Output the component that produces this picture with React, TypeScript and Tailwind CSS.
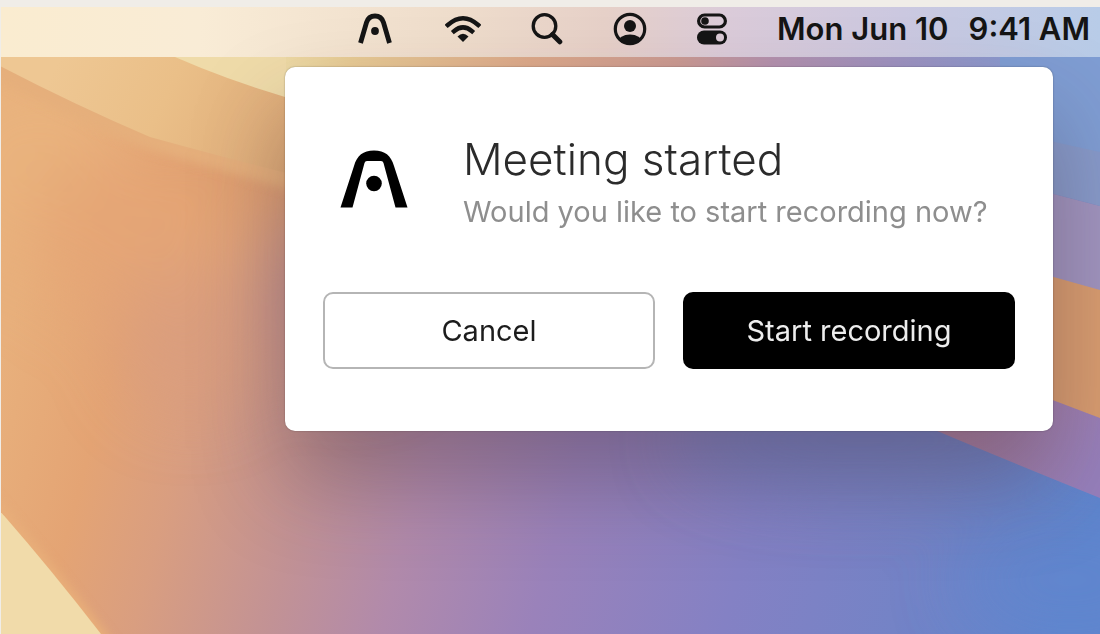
/** Product mark: open arch with a dot in the middle */
const ArchLogo = ({ className }: { className?: string }) => (
  <svg viewBox="0 0 68 58" className={className} fill="currentColor" aria-hidden="true">
    <path d="M0.500 57.500 L14 16 C17 5.500 23 0.500 34 0.500 C45 0.500 51 5.500 54 16 L67.500 57.500 H55.500 L43.500 13 Q43 11 41 11 H27 Q25 11 24.500 13 L12.500 57.500 Z" />
    <circle cx="34" cy="33.500" r="7.800" />
  </svg>
);

/** Menu bar version of the mark, drawn with a lighter stroke */
const ArchGlyph = () => (
  <svg viewBox="0 0 40 34" className="h-[34px] w-10" fill="none" aria-hidden="true">
    <path d="M5.500 31 L11.500 10.500 Q13.500 4 20 4 Q26.500 4 28.500 10.500 L34.500 31" stroke="currentColor" strokeWidth="4.800" />
    <circle cx="20" cy="19" r="3.900" fill="currentColor" />
  </svg>
);

const WifiGlyph = () => (
  <svg viewBox="0 0 36 34" className="h-[34px] w-9" fill="none" aria-hidden="true">
    <path d="M2.800 13 Q18 -0.500 33.200 13" stroke="currentColor" strokeWidth="4.400" strokeLinecap="square" />
    <path d="M9 19.200 Q18 11.600 27 19.200" stroke="currentColor" strokeWidth="4.400" strokeLinecap="square" />
    <path d="M18 30 L12.500 24.500 Q18 19 23.500 24.500 Z" fill="currentColor" />
  </svg>
);

const SearchGlyph = () => (
  <svg viewBox="0 0 32 34" className="h-[34px] w-8" fill="none" stroke="currentColor" aria-hidden="true">
    <circle cx="13.500" cy="14" r="11.300" strokeWidth="3.300" />
    <path d="M21.500 22.500 L28.800 29.800" strokeWidth="5" strokeLinecap="round" />
  </svg>
);

const UserGlyph = () => (
  <svg viewBox="0 0 34 34" className="size-[34px]" aria-hidden="true">
    <defs>
      <clipPath id="user-ring">
        <circle cx="17" cy="17" r="15" />
      </clipPath>
    </defs>
    <circle cx="17" cy="17" r="14.700" fill="none" stroke="currentColor" strokeWidth="3.200" />
    <circle cx="17" cy="14" r="6" fill="currentColor" />
    <ellipse cx="17" cy="30" rx="12" ry="7.500" fill="currentColor" clipPath="url(#user-ring)" />
  </svg>
);

const ControlCenterGlyph = () => (
  <svg viewBox="0 0 30 34" className="h-[34px] w-[30px]" aria-hidden="true">
    <rect x="1.600" y="3" width="26.800" height="12" rx="6" fill="none" stroke="currentColor" strokeWidth="3.200" />
    <circle cx="8" cy="9" r="3.800" fill="currentColor" />
    <rect x="0" y="18.500" width="30" height="14" rx="7" fill="currentColor" />
    <circle cx="23" cy="25.500" r="4" className="fill-[#dccbd6]" />
  </svg>
);

/** Desktop wallpaper: soft colour field with a few sharp diagonal folds */
const Wallpaper = () => (
  <svg
    viewBox="1 7 1099 627"
    preserveAspectRatio="none"
    className="absolute inset-0 size-full"
    aria-hidden="true"
  >
    <defs>
      <linearGradient id="field" gradientUnits="userSpaceOnUse" x1="0" y1="360" x2="1060" y2="640">
        <stop offset="0" stopColor="#e8b07c" />
        <stop offset="0.100" stopColor="#e4a474" />
        <stop offset="0.180" stopColor="#d99e80" />
        <stop offset="0.300" stopColor="#c29295" />
        <stop offset="0.400" stopColor="#b18aab" />
        <stop offset="0.530" stopColor="#9a82ba" />
        <stop offset="0.700" stopColor="#8481c4" />
        <stop offset="0.850" stopColor="#7483c6" />
        <stop offset="1" stopColor="#5f86cf" />
      </linearGradient>
      <linearGradient id="fold" gradientUnits="userSpaceOnUse" x1="60" y1="57" x2="285" y2="170">
        <stop offset="0" stopColor="#eec793" />
        <stop offset="0.450" stopColor="#eabf88" />
        <stop offset="1" stopColor="#dfab78" />
      </linearGradient>
      <linearGradient id="top" gradientUnits="userSpaceOnUse" x1="285" y1="0" x2="1100" y2="0">
        <stop offset="0" stopColor="#ecd9a4" />
        <stop offset="0.080" stopColor="#e8cb95" />
        <stop offset="0.300" stopColor="#dca98a" />
        <stop offset="0.480" stopColor="#cb9a92" />
        <stop offset="0.600" stopColor="#b391ae" />
        <stop offset="0.750" stopColor="#9d92c0" />
        <stop offset="0.880" stopColor="#8b98cd" />
        <stop offset="1" stopColor="#7d9dd3" />
      </linearGradient>
      <linearGradient id="violet" gradientUnits="userSpaceOnUse" x1="960" y1="410" x2="1090" y2="480">
        <stop offset="0" stopColor="#ad80a0" />
        <stop offset="1" stopColor="#967fbb" />
      </linearGradient>
      <filter id="soft" x="-50%" y="-50%" width="200%" height="200%">
        <feGaussianBlur stdDeviation="34" />
      </filter>
      <filter id="edge" x="-10%" y="-10%" width="120%" height="120%">
        <feGaussianBlur stdDeviation="5" />
      </filter>
    </defs>

    <rect width="1100" height="634" fill="url(#field)" />

    <g filter="url(#soft)">
      <ellipse cx="40" cy="170" rx="110" ry="100" fill="#e9b37e" />
      <ellipse cx="140" cy="230" rx="110" ry="90" fill="#e5a676" />
      <ellipse cx="290" cy="160" rx="130" ry="50" fill="#df9f70" />
      <ellipse cx="190" cy="330" rx="70" ry="80" fill="#d99e7e" opacity="0.800" />
      <ellipse cx="350" cy="310" rx="70" ry="70" fill="#bf8f92" />
      <ellipse cx="860" cy="440" rx="180" ry="50" fill="#7581c4" opacity="0.700" />
      <ellipse cx="1070" cy="580" rx="110" ry="60" fill="#6085ce" opacity="0.500" />
    </g>

    {/* upper-left folds */}
    <path d="M-20 70 Q60 115 150 150 L290 190 V100 L0 40 Z" fill="#e5af7b" filter="url(#edge)" />
    <path d="M0 66 Q75 105 150 137 Q215 155 290 174 V40 H0 Z" fill="url(#fold)" />
    <path d="M175 57 Q225 79 285 97 L400 130 V40 H140 Z" fill="#efdba9" />
    <rect x="286" y="40" width="814" height="60" fill="url(#top)" />

    {/* lower-left corner */}
    <path d="M-10 490 Q50 560 120 650 H80 L-10 530 Z" fill="#e8ae79" filter="url(#edge)" />
    <path d="M0 511 Q50 568 101 634 H0 Z" fill="#f1dbaa" />

    {/* right side folds */}
    <path d="M1000 57 H1100 V160 L1000 130 Z" fill="#7f9dd3" />
    <path d="M1000 130 L1100 152 V206 L1000 180 Z" fill="#879aca" />
    <path d="M1000 180 L1100 206 V300 L1000 270 Z" fill="#a094bf" />
    <path d="M1000 262 L1100 290 V420 L1000 385 Z" fill="#d89c70" />
    <path d="M900 380 H1000 L1100 418 V498 Q1020 466 930 428 Z" fill="url(#violet)" />
  </svg>
);

const MenuBar = () => (
  <header className="relative flex h-[50px] items-center justify-end gap-[50px] bg-[linear-gradient(to_right,#faecd0,#f9ecd6_18%,#eedccb_42%,#e6d0c8_55%,#dbcbd9_66%,#cbc8e0_82%,#b8cce8)] pr-[10px] pb-[6px] text-[#151515]">
    <ArchGlyph />
    <WifiGlyph />
    <SearchGlyph />
    <UserGlyph />
    <ControlCenterGlyph />
    <time className="flex gap-5 text-[31px] leading-9 font-semibold whitespace-nowrap">
      <span>Mon Jun 10</span>
      <span>9:41 AM</span>
    </time>
  </header>
);

const MeetingPrompt = () => (
  <section
    role="dialog"
    aria-labelledby="prompt-title"
    className="relative w-full max-w-[768px] rounded-[10px] bg-white px-[38px] pt-[67px] pb-[62px] shadow-[0_50px_90px_rgba(60,40,50,0.34),0_0_2px_rgba(0,0,0,0.35)]"
  >
    <div className="flex items-start gap-[55px] pl-[17px]">
      <ArchLogo className="mt-4 h-[58px] w-[68px] shrink-0 text-black" />
      <div>
        <h1 id="prompt-title" className="text-[44px] leading-[50px] font-light text-[#2b2b2b]">
          Meeting started
        </h1>
        <p className="text-[29px] leading-[56px] text-[#8e8e8e]">Would you like to start recording now?</p>
      </div>
    </div>
    <div className="mt-[52px] grid grid-cols-2 gap-7">
      <button type="button" className="h-[77px] rounded-[10px] border-2 border-[#b5b5b5] bg-white text-[29px] text-[#1c1c1c]">
        Cancel
      </button>
      <button type="button" className="h-[77px] rounded-[10px] bg-black text-[29px] text-[#ededed]">
        Start recording
      </button>
    </div>
  </section>
);

export default function App() {
  return (
    <div className="flex min-h-screen flex-col bg-[#f0ede8] pt-[7px] pl-px font-['Inter',sans-serif]">
      <div className="relative flex grow flex-col overflow-hidden">
        <Wallpaper />
        <MenuBar />
        <main className="flex justify-end pt-[10px] pr-[47px] pb-10 pl-10">
          <MeetingPrompt />
        </main>
      </div>
    </div>
  );
}
